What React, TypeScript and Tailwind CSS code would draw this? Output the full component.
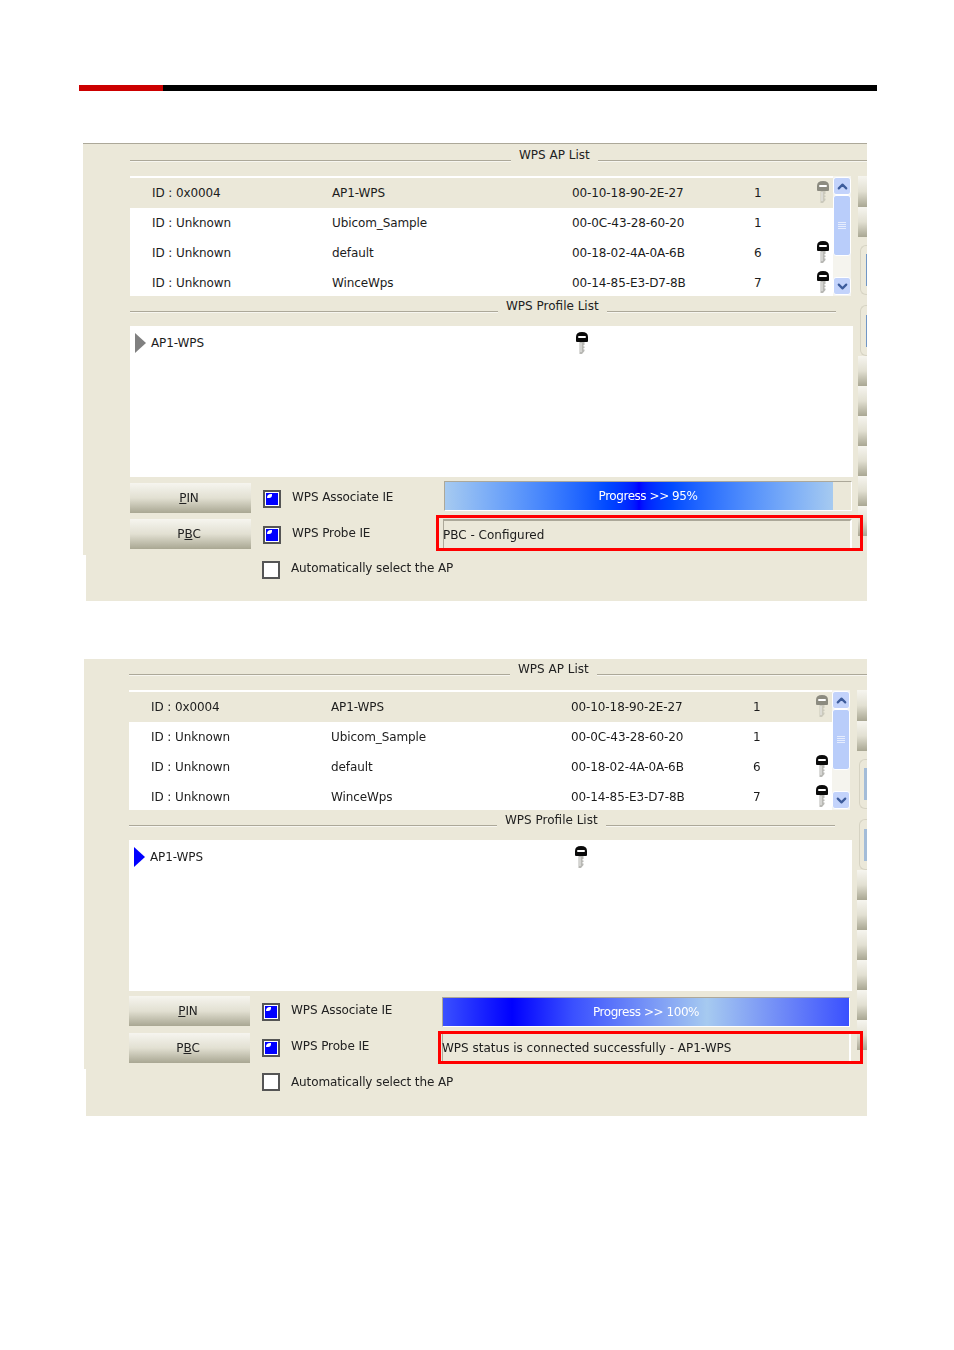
import { ChevronDown, ChevronUp } from "lucide-react";

const networks = [
  { id: "ID : 0x0004", ssid: "AP1-WPS", mac: "00-10-18-90-2E-27", ch: "1", key: "gray", selected: true },
  { id: "ID : Unknown", ssid: "Ubicom_Sample", mac: "00-0C-43-28-60-20", ch: "1", key: "none", selected: false },
  { id: "ID : Unknown", ssid: "default", mac: "00-18-02-4A-0A-6B", ch: "6", key: "black", selected: false },
  { id: "ID : Unknown", ssid: "WinceWps", mac: "00-14-85-E3-D7-8B", ch: "7", key: "black", selected: false },
];

function KeyIcon({ tone }: { tone: string }) {
  const head = tone === "gray" ? "#8c8b80" : "#0a0a0a";
  const shaft = tone === "gray" ? "#cbc9bc" : "#b8b8b4";
  return (
    <svg width="14" height="24" viewBox="0 0 14 24" className="block shrink-0">
      <path d="M1 10 V6 Q1 1 7 1 Q13 1 13 6 V10 Q13 11 12 11 H2 Q1 11 1 10 Z" fill={head} />
      <rect x="3" y="5" width="8" height="2" rx="1" fill="#ffffff" />
      <path d="M4.5 11 H9.5 V14 H8.5 V15.5 H9.5 V17 H8.5 V18.5 H9.5 V20 L7 23 H4.5 Z" fill={shaft} />
      <rect x="5.5" y="12" width="1" height="9" fill="#f0f0ee" />
    </svg>
  );
}

function GroupTitle({ title, row, leftW, rightW, tail }: { title: string; row: string; leftW: string; rightW: string; tail: string }) {
  return (
    <div className={`flex items-start ${row}`}>
      <div className={`mt-[14px] h-[2px] border-t border-[#aca899] bg-white/60 ${leftW}`} />
      <span className="h-[18px] px-[8px] leading-[18px] tracking-normal">{title}</span>
      <div className={`mt-[14px] h-[2px] border-t border-[#aca899] bg-white/60 ${rightW}`} />
      <div className={tail} />
    </div>
  );
}

function Scrollbar() {
  return (
    <div className="flex h-[120px] w-[18px] flex-col bg-[#f5f4ee]">
      <div className="mt-px flex h-[18px] items-center justify-center rounded-[3px] border border-white bg-[#c3d3fb]">
        <ChevronUp size={15} strokeWidth={3.5} color="#3d5c9c" />
      </div>
      <div className="flex h-[61px] flex-col items-center justify-center gap-px rounded-[3px] border border-white bg-[#b9cdfa]">
        <div className="h-px w-[8px] bg-[#e6edfd]" />
        <div className="h-px w-[8px] bg-[#e6edfd]" />
        <div className="h-px w-[8px] bg-[#e6edfd]" />
        <div className="h-px w-[8px] bg-[#e6edfd]" />
      </div>
      <div className="flex-1" />
      <div className="mb-px flex h-[18px] items-center justify-center rounded-[3px] border border-white bg-[#c3d3fb]">
        <ChevronDown size={15} strokeWidth={3.5} color="#3d5c9c" />
      </div>
    </div>
  );
}

function StripButton({ height }: { height: string }) {
  return <div className={`w-full bg-gradient-to-b from-[#f6f5ef] via-[#e2e0d2] to-[#a9a793] ${height}`} />;
}

function StripTab({ height, sliver }: { height: string; sliver: string }) {
  return (
    <div className={`flex items-center justify-end rounded-l-[6px] border-y border-l border-[#d6d3c3] ${height}`}>
      <div className={`h-[32px] ${sliver}`} />
    </div>
  );
}

function SideStrip({ sliver }: { sliver: string }) {
  return (
    <div className="flex flex-col">
      <StripButton height="h-[31px]" />
      <StripButton height="h-[30px]" />
      <div className="ml-[2px] mt-[8px]">
        <StripTab height="h-[50px]" sliver={sliver} />
      </div>
      <div className="ml-[2px] mt-[10px]">
        <StripTab height="h-[51px]" sliver={sliver} />
      </div>
      <StripButton height="h-[30px]" />
      <StripButton height="h-[30px]" />
      <StripButton height="h-[30px]" />
      <StripButton height="h-[30px]" />
      <StripButton height="h-[30px]" />
      <StripButton height="h-[30px]" />
    </div>
  );
}

function NetworkList() {
  return (
    <div className="flex h-[120px] w-[721px]">
      <div className="w-[703px] bg-white pt-[2px]">
        {networks.map((n) => (
          <div key={n.mac} className={`flex h-[30px] items-center pl-[22px] text-[#1c1c1c] ${n.selected ? "bg-[#ebe8d9]" : ""}`}>
            <span className="w-[180px]">{n.id}</span>
            <span className="w-[240px]">{n.ssid}</span>
            <span className="w-[182px]">{n.mac}</span>
            <span className="w-[62px]">{n.ch}</span>
            <div className="-translate-y-[1px]">{n.key !== "none" && <KeyIcon tone={n.key} />}</div>
          </div>
        ))}
      </div>
      <Scrollbar />
    </div>
  );
}

function Check({ checked }: { checked: boolean }) {
  return (
    <div className="h-[18px] w-[18px] shrink-0 border-2 border-[#555555] bg-white p-px">
      {checked && (
        <div className="h-full w-full bg-[#0000ff] pl-px pt-px">
          <div className="h-[4px] w-[5px] rounded-tl-[4px] rounded-br-[3px] bg-white" />
        </div>
      )}
    </div>
  );
}

function ActionButton({ first, mark, rest, className }: { first: string; mark: string; rest: string; className: string }) {
  return (
    <div className={`flex h-[30px] w-[121px] items-center justify-center bg-gradient-to-b from-[#f6f5ef] via-[#e2e0d2] to-[#a9a793] pr-[3px] ${className}`}>
      <span>
        {first}
        <span className="underline">{mark}</span>
        {rest}
      </span>
    </div>
  );
}

function Panel({ variant }: { variant: "a" | "b" }) {
  const a = variant === "a";
  return (
    <div className={a ? "mt-[52px]" : "mt-[58px]"}>
      <div className={`flex ${a ? "ml-[83px] h-[412px] w-[784px] border-[#aca899]" : "ml-[84px] h-[410px] w-[783px] border-[#ebe8d9]"} flex-col border-t bg-[#ebe8d9]`}>
        <div className={`flex flex-col ${a ? "ml-[47px]" : "ml-[45px]"}`}>
          <GroupTitle
            title="WPS AP List"
            row={a ? "h-[32px] pt-[2px]" : "h-[30px]"}
            leftW="w-[381px]"
            rightW="flex-1"
            tail="hidden"
          />
          <div className="flex">
            <div className="w-[728px]">
              <NetworkList />
              <GroupTitle
                title="WPS Profile List"
                row="h-[30px] pt-px"
                leftW="w-[368px]"
                rightW="w-[229px]"
                tail="flex-1"
              />
              <div className="flex h-[151px] w-[723px] items-start bg-white pl-[5px] pt-[7px]">
                <div className={`h-0 w-0 border-y-[10px] border-l-[11px] border-y-transparent ${a ? "border-l-[#808080]" : "border-l-[#0000ff]"}`} />
                <span className="ml-[5px] w-[424px] leading-[20px] text-[#1c1c1c]">AP1-WPS</span>
                <div className="-mt-[2px]">
                  <KeyIcon tone="black" />
                </div>
              </div>
              <div className="flex h-[78px]">
                <div className="w-[121px]">
                  <ActionButton first="" mark="P" rest="IN" className={a ? "mt-[6px]" : "mt-[5px]"} />
                  <ActionButton first="P" mark="B" rest="C" className={a ? "mt-[6px]" : "mt-[7px]"} />
                </div>
                <div className="ml-[12px] w-[180px]">
                  <div className={`flex items-center ${a ? "mt-[13px]" : "mt-[12px]"}`}>
                    <Check checked />
                    <span className="ml-[11px] -translate-y-[2px] leading-[18px]">WPS Associate IE</span>
                  </div>
                  <div className="mt-[18px] flex items-center">
                    <Check checked />
                    <span className="ml-[11px] -translate-y-[2px] leading-[18px]">WPS Probe IE</span>
                  </div>
                </div>
                <div className="w-[409px]">
                  {a ? (
                    <div className="ml-px mt-[4px] h-[30px] w-[408px] border border-[#aca899] border-b-white border-r-white">
                      <div className="flex h-full w-[388px] bg-gradient-to-r from-[#a6caf0] via-[#0000ff] to-[#a6caf0]" />
                      <div className="-mt-[28px] text-center leading-[28px] tracking-[-0.45px] text-white">Progress &gt;&gt; 95%</div>
                    </div>
                  ) : (
                    <div className="mt-[6px] h-[30px] w-[408px] border border-[#aca899] border-b-white border-r-white bg-[linear-gradient(to_right,#3a50ff_0%,#0000ff_17%,#3a50ff_32%,#a6caf0_65%,#6a84f8_85%,#3a50ff_100%)] text-center leading-[28px] tracking-[-0.45px] text-white">
                      Progress &gt;&gt; 100%
                    </div>
                  )}
                  <div className={`relative flex h-[30px] w-[409px] items-center border-r-2 ${a ? "mt-[8px] border-l border-t-2 border-[#aca899] border-r-white" : "mt-[6px] border-l border-[#aca899] border-r-white"}`}>
                    <span className="-ml-px tracking-normal text-[#1c1c1c]">{a ? "PBC - Configured" : "WPS status is connected successfully - AP1-WPS"}</span>
                    <div className={`absolute z-10 border-[3px] border-[#ff0000] ${a ? "-bottom-[2px] -left-[8px] -right-[13px] -top-[6px]" : "-bottom-px -left-[5px] -right-[14px] -top-[2px]"}`} />
                  </div>
                </div>
              </div>
            </div>
            <div className="flex-1">
              <SideStrip sliver={a ? "w-px bg-[#7096c6]" : "w-[3px] bg-[#a3bcd8]"} />
            </div>
          </div>
        </div>
      </div>
      <div className={`ml-[86px] flex w-[781px] items-start bg-[#ebe8d9] ${a ? "h-[46px] pt-[6px]" : "h-[47px] pt-[4px]"} pl-[176px]`}>
        <Check checked={false} />
        <span className={`ml-[11px] leading-[18px] ${a ? "-translate-y-[2px]" : ""}`}>Automatically select the AP</span>
      </div>
    </div>
  );
}

export default function App() {
  return (
    <div className="h-[1350px] w-[954px] overflow-hidden bg-white pt-[85px] font-['DejaVu_Sans',sans-serif] text-[12px] tracking-[-0.1px] text-[#222222]">
      <div className="ml-[79px] flex h-[6px] w-[798px]">
        <div className="w-[84px] bg-[#cc0000]" />
        <div className="flex-1 bg-black" />
      </div>
      <div className="blur-[0.3px]">
        <Panel variant="a" />
        <Panel variant="b" />
      </div>
    </div>
  );
}
